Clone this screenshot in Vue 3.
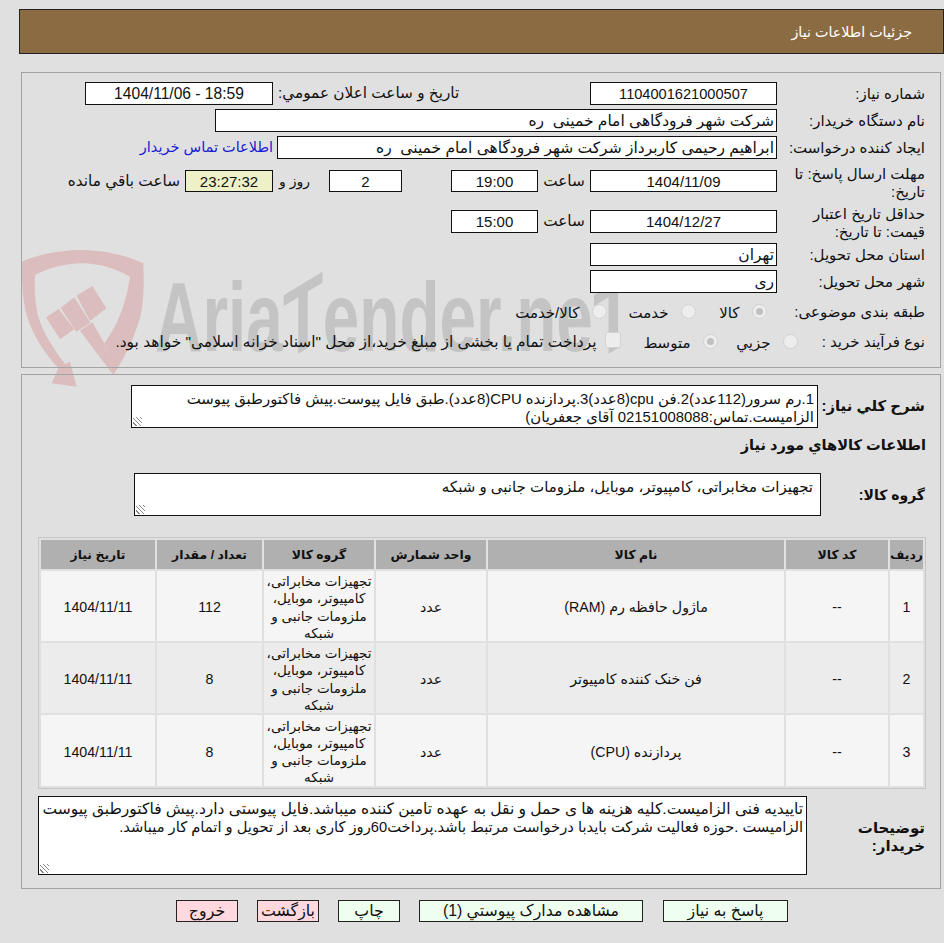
<script setup>
const rows = [
  { id: '1', name: 'ماژول حافظه رم (RAM)', qty: '112' },
  { id: '2', name: 'فن خنک کننده کامپیوتر', qty: '8' },
  { id: '3', name: 'پردازنده (CPU)', qty: '8' },
]
const group = 'تجهیزات مخابراتی، کامپیوتر، موبایل، ملزومات جانبی و شبکه'
</script>

<template>
  <div class="page" dir="rtl">
    <header class="head">جزئیات اطلاعات نیاز</header>

    <section class="panel info">
      <div class="row r1">
        <span class="lab">شماره نیاز:</span>
        <span class="box w187 c id">1104001621000507</span>
        <span class="lab2">تاریخ و ساعت اعلان عمومي:</span>
        <span class="box w188 c stamp" dir="ltr">1404/11/06 - 18:59</span>
      </div>
      <div class="row r2">
        <span class="lab">نام دستگاه خریدار:</span>
        <span class="box w562 t">شرکت شهر فرودگاهی امام خمینی&nbsp; ره</span>
      </div>
      <div class="row r3">
        <span class="lab">ایجاد کننده درخواست:</span>
        <span class="box w500 t">ابراهیم رحیمی کاربرداز شرکت شهر فرودگاهی امام خمینی&nbsp; ره</span>
        <a class="link">اطلاعات تماس خریدار</a>
      </div>
      <div class="row r4">
        <span class="lab two">مهلت ارسال پاسخ: تا تاریخ:</span>
        <span class="box w187 c">1404/11/09</span>
        <span class="mid">ساعت</span>
        <span class="box w87 c">19:00</span>
        <span class="box w73 c days">2</span>
        <span class="ruz">روز و</span>
        <span class="box w88 c timer">23:27:32</span>
        <span class="rem">ساعت باقي مانده</span>
      </div>
      <div class="row r5">
        <span class="lab two">حداقل تاریخ اعتبار قیمت: تا تاریخ:</span>
        <span class="box w187 c">1404/12/27</span>
        <span class="mid">ساعت</span>
        <span class="box w87 c">15:00</span>
      </div>
      <div class="row r6">
        <span class="lab">استان محل تحویل:</span>
        <span class="box w187 t">تهران</span>
      </div>
      <div class="row r7">
        <span class="lab">شهر محل تحویل:</span>
        <span class="box w187 t">ری</span>
      </div>
      <div class="row r8">
        <span class="lab">طبقه بندی موضوعی:</span>
        <span class="radio on"></span><span class="opt o1">کالا</span>
        <span class="radio"></span><span class="opt o2">خدمت</span>
        <span class="radio"></span><span class="opt">کالا/خدمت</span>
      </div>
      <div class="row r9">
        <span class="lab">نوع فرآیند خرید :</span>
        <span class="radio"></span><span class="opt o3">جزيي</span>
        <span class="radio on"></span><span class="opt o4">متوسط</span>
        <span class="check"></span><span class="opt wide">پرداخت تمام یا بخشی از مبلغ خرید،از محل "اسناد خزانه اسلامی" خواهد بود.</span>
      </div>
    </section>

    <section class="panel detail">
      <div class="row d1">
        <span class="blab">شرح کلي نیاز:</span>
        <div class="area a1">1.رم سرور(112عدد)2.فن cpu(8عدد)3.پردازنده CPU(8عدد).طبق فایل پیوست.پیش فاکتورطبق پیوست الزامیست.تماس:02151008088 آقای جعفریان)<i class="grip"></i></div>
      </div>
      <h3 class="title">اطلاعات کالاهاي مورد نیاز</h3>
      <div class="row d2">
        <span class="blab">گروه کالا:</span>
        <div class="area a2">{{ group }}<i class="grip"></i></div>
      </div>
      <div class="tbl">
        <div class="cell th">ردیف</div>
        <div class="cell th">کد کالا</div>
        <div class="cell th">نام کالا</div>
        <div class="cell th">واحد شمارش</div>
        <div class="cell th">گروه کالا</div>
        <div class="cell th">تعداد / مقدار</div>
        <div class="cell th">تاریخ نیاز</div>
        <template v-for="(r, i) in rows" :key="r.id">
          <div class="cell" :class="i === 1 ? 'even' : 'odd'">{{ r.id }}</div>
          <div class="cell" :class="i === 1 ? 'even' : 'odd'">--</div>
          <div class="cell" :class="i === 1 ? 'even' : 'odd'">{{ r.name }}</div>
          <div class="cell" :class="i === 1 ? 'even' : 'odd'">عدد</div>
          <div class="cell grp" :class="i === 1 ? 'even' : 'odd'">{{ group }}</div>
          <div class="cell" :class="i === 1 ? 'even' : 'odd'">{{ r.qty }}</div>
          <div class="cell" :class="i === 1 ? 'even' : 'odd'">1404/11/11</div>
        </template>
      </div>
      <div class="row d3">
        <span class="blab">توضیحات<br>خریدار:</span>
        <div class="area a3">تاییدیه فنی الزامیست.کلیه هزینه ها ی حمل و نقل به عهده تامین کننده میباشد.فایل پیوستی دارد.پیش فاکتورطبق پیوست<br><span class="line2">الزامیست .حوزه فعالیت شرکت بایدبا درخواست مرتبط باشد.پرداخت60روز کاری بعد از تحویل و اتمام کار میباشد.</span><i class="grip"></i></div>
      </div>
    </section>

    <footer class="btns">
      <button class="btn green b1">پاسخ به نیاز</button>
      <button class="btn green b2">مشاهده مدارک پیوستي (1)</button>
      <button class="btn green b3">چاپ</button>
      <button class="btn pink b3">بازگشت</button>
      <button class="btn pink b3">خروج</button>
    </footer>

    <div class="mark" dir="ltr" aria-hidden="true">
      <svg class="shield" width="300" height="150" viewBox="0 0 900 450">
        <g fill="#dcbdbd">
          <path d="M20 65 C80 40 140 30 200 30 C265 30 330 45 385 70 C388 150 385 210 370 250 C350 310 325 360 295 405 L268 310 C300 265 330 210 345 110 C300 85 250 70 200 70 C150 70 100 85 60 105 C58 150 60 190 70 230 C85 280 115 325 150 372 L165 365 L185 440 L110 430 L130 385 C85 335 50 280 35 225 C22 175 20 120 20 65Z"/>
          <path d="M185 167 L232 138 L274 205 L225 243Z"/>
          <path d="M137 203 L178 172 L226 248 L184 275Z"/>
          <path d="M93 232 L131 207 L178 268 L135 298Z"/>
          <path d="M195 272 L232 247 L268 310 L295 405Z"/>
        </g>
      </svg>
      <span class="wm">Aria<b class="slant">T</b>ender.ne<b class="slant">T</b></span>
    </div>
  </div>
</template>

<style>
html, body { margin: 0; background: #e0e0e0; }
</style>

<style scoped>
.page {
  position: relative;
  width: 944px;
  height: 943px;
  overflow: hidden;
  box-sizing: border-box;
  padding-top: 9px;
  background: #e0e0e0;
  color: #111;
  font: 15px/1.2 "Liberation Sans", "DejaVu Sans", sans-serif;
}
.head {
  box-sizing: border-box;
  margin-left: 19px;
  height: 45px;
  padding: 14px 31px 0 0;
  background: #8b6c42;
  border: 1px solid #222;
  color: #fff;
  font-size: 14.3px;
}
.panel {
  position: relative;
  z-index: 1;
  box-sizing: border-box;
  margin: 0 3px 0 21px;
  border: 1px solid #a3a3a3;
}
.info { margin-top: 18px; height: 296px; padding-top: 9px; }
.detail { margin-top: 6px; height: 515px; padding-top: 10px; }
.row { display: flex; align-items: center; }
.lab {
  box-sizing: border-box;
  width: 163px;
  padding-right: 15px;
  flex: none;
}
.two { line-height: 18px; padding-top: 4px; }
.box {
  box-sizing: border-box;
  flex: none;
  height: 23px;
  line-height: 22px;
  padding: 0 2px;
  background: #fff;
  border: 1px solid #111;
  white-space: nowrap;
  overflow: hidden;
}
.id { font-size: 14.6px; }
.stamp { font-size: 15.6px; }
.t { font-size: 15.5px; }
.c { text-align: center; }
.w187 { width: 187px; }
.w188 { width: 188px; }
.w562 { width: 562px; }
.w500 { width: 500px; }
.w87 { width: 87px; }
.w73 { width: 73px; }
.w88 { width: 88px; }
.r1, .r2, .r3 { height: 23px; margin-bottom: 4px; }
.r3 { margin-bottom: 0; }
.r4 { height: 40px; margin-top: 2px; }
.r4 .box { height: 22px; line-height: 21px; }
.r5 { height: 40px; }
.r6 { height: 23px; margin-top: 2px; margin-bottom: 4px; }
.r7 { height: 23px; }
.r8 { height: 30px; margin-top: 4px; }
.r9 { height: 30px; }
.lab2 {
  box-sizing: border-box;
  flex: none;
  width: 312px;
  margin-right: 5px;
  padding-left: 5px;
  text-align: left;
  font-size: 15.3px;
}
.link { margin-right: 4px; color: #1a1ad8; white-space: nowrap; font-size: 14.5px; }
.mid { width: 52px; text-align: center; flex: none; font-size: 15.3px; }
.days { margin-right: 49px; }
.ruz { box-sizing: border-box; width: 56px; padding-right: 19px; flex: none; font-size: 14px; }
.timer { background: #eef0c8; }
.rem { margin-right: 5px; white-space: nowrap; font-size: 15.3px; }
.radio {
  box-sizing: border-box;
  flex: none;
  position: relative;
  width: 15px;
  height: 15px;
  border-radius: 50%;
  background: #ededed;
  border: 1px solid #d2d2d2;
  margin-top: -2px;
}
.radio.on::after {
  content: "";
  position: absolute;
  inset: 3px;
  border-radius: 50%;
  background: #c0c0c0;
}
.check {
  box-sizing: border-box;
  flex: none;
  width: 16px;
  height: 16px;
  background: #ededed;
  border: 1px solid #d2d2d2;
  border-radius: 2px;
  margin-top: -4px;
}
.opt { box-sizing: border-box; padding-right: 12px; white-space: nowrap; flex: none; padding-top: 1px; }
.wide { font-size: 15.45px; padding-right: 8px; }
.o1 { width: 56px; }
.o2 { width: 74px; }
.o3 { width: 65px; }
.o4 { width: 82px; }
.r8 .lab { width: 173.5px; }
.r9 .lab { width: 142.5px; }
.blab {
  box-sizing: border-box;
  flex: none;
  font-weight: 700;
  padding-right: 15px;
  font-size: 14px;
}
.d1 .blab { width: 122px; font-size: 14.9px; }
.d2 .blab { width: 119px; padding-top: 2px; }
.d3 .blab { width: 133px; line-height: 18px; padding-top: 2px; font-size: 15px; }
.area {
  position: relative;
  box-sizing: border-box;
  background: #fff;
  border: 1px solid #111;
  line-height: 18px;
  text-align: right;
}
.grip {
  position: absolute;
  left: 1px;
  bottom: 1px;
  width: 9px;
  height: 9px;
  background: repeating-linear-gradient(45deg, transparent 0 2px, #8a8a8a 2px 3px);
}
.a1 { width: 687px; height: 43px; padding: 4px 3px 0 3px; font-size: 14.9px; }
.title {
  margin: 8px 14px 0 0;
  font-size: 14.6px;
  font-weight: 700;
  line-height: 18px;
  height: 37px;
}
.a2 { width: 687px; height: 43px; padding: 4px 7px 0 4px; }
.tbl {
  box-sizing: border-box;
  margin: 21px 14px 0 14px;
  width: 888px;
  height: 252px;
  display: grid;
  grid-template-columns: 33px 102px 296px 110px 110px 105px 114px;
  grid-template-rows: 29px 70px 70px 71px;
  gap: 2px;
  padding: 2px;
  border: 1px solid #c6c6c6;
  background: #e0e0e0;
}
.cell {
  box-sizing: border-box;
  display: flex;
  align-items: center;
  justify-content: center;
  text-align: center;
}
.th { background: #b0b0b0; font-weight: 700; font-size: 12.4px; padding-top: 1px; }
.odd, .even { font-size: 14.2px; padding-top: 4px; }
.odd { background: #f5f5f5; }
.even { background: #ececec; }
.grp { line-height: 17.2px; font-size: 13.5px; padding: 3px 2px 0; }
.d3 { margin-top: 7px; }
.a3 { width: 769px; height: 79px; padding: 3px 3px 0 3px; font-size: 15.5px; }
.line2 { font-size: 14.7px; }
.btns {
  position: relative;
  z-index: 1;
  display: flex;
  gap: 19px;
  margin: 11px 156px 0 0;
}
.btn {
  box-sizing: border-box;
  height: 22px;
  padding: 0;
  border: 1px solid #222;
  color: #111;
  font: inherit;
  font-size: 15.8px;
  line-height: 20px;
}
.green { background: #efffef; }
.pink { background: #ffd9dd; }
.b1 { width: 125px; margin-left: 1px; }
.b2 { width: 224px; }
.b3 { width: 62px; }
.mark {
  position: absolute;
  left: 15px;
  top: 240px;
  width: 640px;
  height: 150px;
  pointer-events: none;
}
.shield { position: absolute; left: 0; top: 0; }
.wm {
  position: absolute;
  left: 140px;
  top: 28px;
  font: 700 98px/1 "Liberation Sans", sans-serif;
  color: #c4c4c4;
  transform-origin: left top;
  transform: scaleX(0.67);
  white-space: nowrap;
}
.slant {
  display: inline-block;
  font-weight: 700;
  transform: skewY(-22deg);
  transform-origin: 50% 50%;
}
</style>
